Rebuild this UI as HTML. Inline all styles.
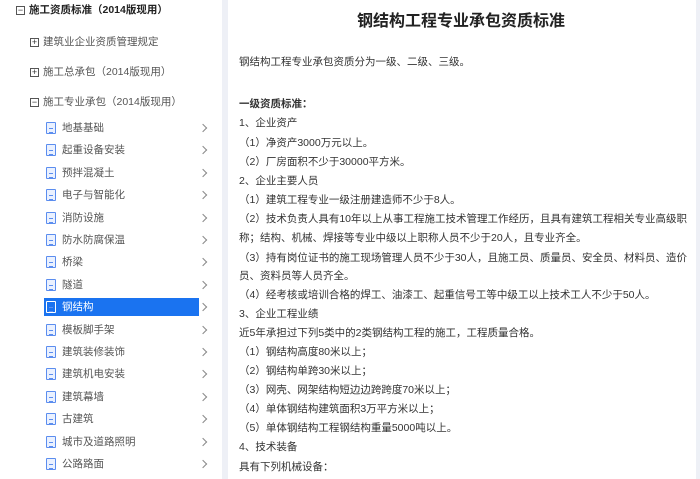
<!DOCTYPE html>
<html><head><meta charset="utf-8"><style>
*{margin:0;padding:0;box-sizing:border-box}
body{width:700px;height:479px;overflow:hidden;background:#fff;font-family:"Liberation Sans","Noto Sans CJK SC",sans-serif;position:relative;color:#333}
.side{position:absolute;left:0;top:0;width:222px;height:479px}
.bar{position:absolute;left:222px;top:0;width:6px;height:479px;background:#eef0f6}
.rbar{position:absolute;left:696px;top:0;width:4px;height:479px;background:#eef0f6}
.t{position:absolute;font-size:10.5px;white-space:nowrap;line-height:16px}
.box{position:absolute;width:9px;height:9px;border:1px solid #555;font-size:9px;line-height:7px;text-align:center;color:#333}
.doc{position:absolute;left:46px;width:10px;height:12px;border:1.5px solid #5b8def;border-radius:1px;background:#eaf1ff}
.doc:after{content:"";position:absolute;left:2px;top:5px;width:4px;height:3px;border-top:1px solid #5b8def;border-bottom:1px solid #5b8def}
.chev{position:absolute;left:200px;width:6px;height:6px;border-right:1px solid #888;border-top:1px solid #888;transform:rotate(45deg)}
.hl{position:absolute;left:44px;top:298px;width:155px;height:18px;background:#1a73f0}
.c{position:absolute;left:239px;font-size:10.5px;line-height:16px;white-space:nowrap;color:#333}
h1{position:absolute;left:357px;top:7px;font-size:16px;font-weight:bold;color:#222;white-space:nowrap}
</style></head><body>
<div class="side">
<div class="box" style="left:16px;top:6px">−</div><div class="t" style="left:29px;top:2px;font-weight:bold;color:#222">施工资质标准（2014版现用）</div>
<div class="box" style="left:30px;top:38px">+</div><div class="t" style="left:43px;top:34px;color:#555">建筑业企业资质管理规定</div>
<div class="box" style="left:30px;top:68px">+</div><div class="t" style="left:43px;top:64px;color:#555">施工总承包（2014版现用）</div>
<div class="box" style="left:30px;top:98px">−</div><div class="t" style="left:43px;top:94px;color:#555">施工专业承包（2014版现用）</div>
<div class="hl"></div>
</div>
<div id="items"></div>
<div class="bar"></div><div class="rbar"></div>
<h1>钢结构工程专业承包资质标准</h1>
<div class="c" style="top:54px">钢结构工程专业承包资质分为一级、二级、三级。</div>
<div class="c" style="top:96px;font-weight:bold">一级资质标准：</div>
<div class="c" style="top:115px">1、企业资产</div>
<div class="c" style="top:135px">（1）净资产3000万元以上。</div>
<div class="c" style="top:154px">（2）厂房面积不少于30000平方米。</div>
<div class="c" style="top:173px">2、企业主要人员</div>
<div class="c" style="top:192px">（1）建筑工程专业一级注册建造师不少于8人。</div>
<div class="c" style="top:211px">（2）技术负责人具有10年以上从事工程施工技术管理工作经历，且具有建筑工程相关专业高级职</div>
<div class="c" style="top:230px">称；结构、机械、焊接等专业中级以上职称人员不少于20人，且专业齐全。</div>
<div class="c" style="top:250px">（3）持有岗位证书的施工现场管理人员不少于30人，且施工员、质量员、安全员、材料员、造价</div>
<div class="c" style="top:268px">员、资料员等人员齐全。</div>
<div class="c" style="top:287px">（4）经考核或培训合格的焊工、油漆工、起重信号工等中级工以上技术工人不少于50人。</div>
<div class="c" style="top:306px">3、企业工程业绩</div>
<div class="c" style="top:325px">近5年承担过下列5类中的2类钢结构工程的施工，工程质量合格。</div>
<div class="c" style="top:344px">（1）钢结构高度80米以上；</div>
<div class="c" style="top:363px">（2）钢结构单跨30米以上；</div>
<div class="c" style="top:382px">（3）网壳、网架结构短边边跨跨度70米以上；</div>
<div class="c" style="top:401px">（4）单体钢结构建筑面积3万平方米以上；</div>
<div class="c" style="top:420px">（5）单体钢结构工程钢结构重量5000吨以上。</div>
<div class="c" style="top:439px">4、技术装备</div>
<div class="c" style="top:459px">具有下列机械设备：</div>
<script>
var n=["地基基础","起重设备安装","预拌混凝土","电子与智能化","消防设施","防水防腐保温","桥梁","隧道","钢结构","模板脚手架","建筑装修装饰","建筑机电安装","建筑幕墙","古建筑","城市及道路照明","公路路面"];
var h="";
for(var i=0;i<n.length;i++){var y=128+i*22.4;var s=i==8;
h+='<div class="doc" style="top:'+(y-6)+'px;'+(s?'border-color:#fff;background:#1a73f0':'')+'"></div>';
h+='<div class="t" style="left:62px;top:'+(y-8)+'px;color:'+(s?'#fff':'#555')+'">'+n[i]+'</div>';
h+='<div class="chev" style="top:'+(y-3)+'px"></div>';}
document.getElementById("items").innerHTML=h;
</script>
</body></html>
